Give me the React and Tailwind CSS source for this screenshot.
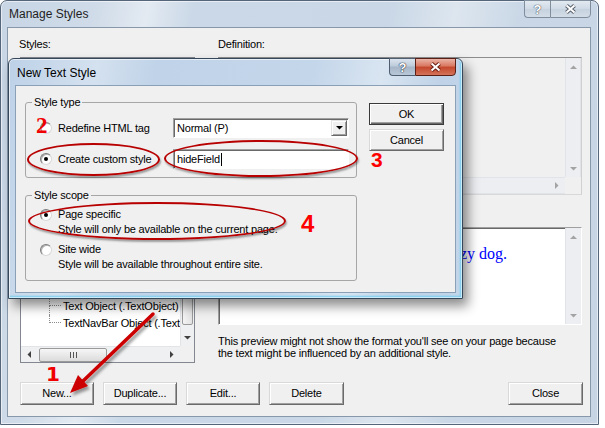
import React from 'react';

const SANS = "font-['Liberation_Sans',Arial,sans-serif]";

function Tri({ dir, color = '#505050' }) {
    const vert = dir === 'up' || dir === 'down';
    const pts = {
        up: '0,4 3.5,0.5 7,4',
        down: '0,0 7,0 3.5,3.5',
        left: '4,0 4,7 0.5,3.5',
        right: '0,0 0,7 3.5,3.5',
    }[dir];
    return (
        <svg width={vert ? 7 : 4} height={vert ? 4 : 7} viewBox={vert ? '0 0 7 4' : '0 0 4 7'}>
            <polygon points={pts} fill={color} />
        </svg>
    );
}

function XGlyph({ active }) {
    const d = 'M2.5 1.5 L10.5 8.5 M10.5 1.5 L2.5 8.5';
    return (
        <svg width="13" height="10" viewBox="0 0 13 10">
            <path d={d} stroke={active ? '#6b1d12' : '#56606c'} strokeWidth="4" />
            <path d={d} stroke="#fff" strokeWidth="2" />
        </svg>
    );
}

function Caption({ active }) {
    return (
        <div className="ml-auto -mt-[1px] flex">
            <div className={`w-[26px] h-[18px] flex items-center justify-center border border-r-0 rounded-bl-[4px] ${active ? 'border-[#4f5e70] bg-[linear-gradient(#dbe4ee,#bccad9_45%,#a6b6c8_50%,#b9c8d8)]' : 'border-[#7f8d9c] bg-[linear-gradient(#e2e9f0,#cfdae6_50%,#c6d2df_51%,#d3dde8)]'}`}>
                <span className={`text-[13px] font-bold leading-none tracking-normal text-white ${active ? '[text-shadow:0_0_1px_#2b3541,0_0_1px_#2b3541,0_0_1px_#2b3541]' : '[text-shadow:0_0_1px_#59636f,0_0_1px_#59636f,0_0_1px_#59636f]'}`}>?</span>
            </div>
            <div className={`w-[41px] h-[18px] flex items-center justify-center border rounded-br-[4px] ${active ? 'border-[#5a1f17] bg-[linear-gradient(#eab3a6,#d8765f_45%,#c4462b_50%,#d3745a)]' : 'border-[#7f8d9c] bg-[linear-gradient(#e2e9f0,#cfdae6_50%,#c6d2df_51%,#d3dde8)]'}`}>
                <XGlyph active={active} />
            </div>
        </div>
    );
}

function Btn({ children, className = '', def = false }) {
    return (
        <div className={`flex items-center justify-center bg-[#f0f0f0] border ${def
            ? 'border-[#3a3a3a] shadow-[inset_1px_1px_0_#fff,inset_-1px_-1px_0_#696969,inset_-2px_-2px_0_#a0a0a0]'
            : 'border-t-[#d9d9d9] border-l-[#d9d9d9] border-r-[#6a6a6a] border-b-[#6a6a6a] shadow-[inset_1px_1px_0_#fff,inset_-1px_-1px_0_#a0a0a0]'} ${className}`}>
            {children}
        </div>
    );
}

function Radio({ checked }) {
    return (
        <span className="w-[12px] h-[12px] shrink-0 rounded-full bg-white border border-t-[#7a7a7a] border-l-[#7a7a7a] border-r-[#d8d8d8] border-b-[#d8d8d8] shadow-[inset_1px_1px_0_#b0b0b0] flex items-center justify-center">
            {checked && <span className="w-[4px] h-[4px] rounded-full bg-black" />}
        </span>
    );
}

const sunken = 'border border-t-[#a0a0a0] border-l-[#a0a0a0] border-r-white border-b-white shadow-[inset_1px_1px_0_#696969]';

function ScrollBtn({ dir, className = '', color }) {
    return (
        <div className={`flex items-center justify-center shrink-0 ${className}`}>
            <Tri dir={dir} color={color} />
        </div>
    );
}

const treeItems = [
    'Body (body)',
    'Heading 1 (h1)',
    'Heading 2 (h2)',
    'Hyperlink (a)',
    'Banner Object (.BannerObject)',
    'Footer Object (.FooterObject)',
    'Form Object (.FormObject)',
    'Header Object (.HeaderObject)',
    'Image Object (.ImageObject)',
    'Layout Table (.LayoutTable)',
    'Nav Object (.NavObject)',
    'Page Object (.PageObject)',
    'Search Object (.SearchObject)',
    'Table Object (.TableObject)',
    'Text Object (.TextObject)',
    'TextNavBar Object (.TextNavBarObject)',
];

function StylesList() {
    return (
        <div className="h-[306px] flex flex-col bg-white border border-[#828790]">
            <div className="flex-1 flex min-h-0">
                <div className="flex-1 overflow-hidden pt-[2px] whitespace-nowrap">
                    {treeItems.map((t, i) => {
                        const last = i === treeItems.length - 1;
                        return (
                            <div key={t} className="flex h-[17px] items-center">
                                <div className="w-[28px] shrink-0" />
                                <div className="w-[12px] h-full shrink-0 flex flex-col">
                                    <div className="h-[8px] border-l border-b border-dotted border-[#8c8c8c]" />
                                    <div className={`flex-1 ${last ? '' : 'border-l border-dotted border-[#8c8c8c]'}`} />
                                </div>
                                <span className="ml-[2px]">{t}</span>
                            </div>
                        );
                    })}
                </div>
                <div className="w-[14px] flex flex-col bg-[#eef0f2] border-l border-[#e2e4e7]">
                    <ScrollBtn dir="up" className="h-[17px]" color="#404040" />
                    <div className="h-[249px] mt-[1px] mx-[1px] rounded-[2px] border border-[#9a9a9a] bg-[linear-gradient(90deg,#f4f4f4,#e2e2e2)]" />
                    <div className="flex-1" />
                    <ScrollBtn dir="down" className="h-[17px]" color="#404040" />
                </div>
            </div>
            <div className="h-[16px] flex">
                <div className="flex-1 flex items-center bg-[#eef0f2] border-t border-[#e2e4e7]">
                    <ScrollBtn dir="left" className="w-[15px] h-full" color="#404040" />
                    <div className="ml-[3px] w-[68px] h-[14px] rounded-[2px] border border-[#9a9a9a] bg-[linear-gradient(#f6f6f6,#dcdcdc)] flex items-center justify-center gap-[2px]">
                        <span className="w-[1px] h-[6px] bg-[#555]" />
                        <span className="w-[1px] h-[6px] bg-[#555]" />
                        <span className="w-[1px] h-[6px] bg-[#555]" />
                    </div>
                    <div className="flex-1" />
                    <ScrollBtn dir="right" className="w-[17px] h-full" color="#404040" />
                </div>
                <div className="w-[14px] bg-[#f0f0f0]" />
            </div>
        </div>
    );
}

function DefinitionBox() {
    return (
        <div className="h-[138px] flex flex-col bg-[#f0f0f0] border border-t-[#8d8d8d] border-l-[#a0a0a0] border-r-[#d0d0d0] border-b-[#d8d8d8]">
            <div className="flex-1 flex">
                <div className="flex-1" />
                <div className="w-[16px] flex flex-col justify-between bg-[#eceef1] border-l border-r border-[#e0e3e7]">
                    <ScrollBtn dir="up" className="h-[17px]" color="#a3a3a3" />
                    <ScrollBtn dir="down" className="h-[17px]" color="#a3a3a3" />
                </div>
            </div>
            <div className="h-[17px] flex">
                <div className="flex-1 flex justify-end bg-[#eceef1] border-t border-b border-[#e0e3e7]">
                    <ScrollBtn dir="right" className="w-[17px] h-full" color="#a3a3a3" />
                </div>
                <div className="w-[16px] bg-[#f0f0f0]" />
            </div>
        </div>
    );
}

function PreviewBox() {
    return (
        <div className={`h-[98px] flex bg-white ${sunken}`}>
            <div className="flex-1 min-w-0 overflow-hidden flex justify-end pr-[58px] pt-[17px]">
                <span className="whitespace-nowrap font-['Liberation_Serif','Times_New_Roman',serif] text-[16px] leading-[18px] tracking-normal text-[#0000ff]">
                    The quick brown fox jumps over the lazy dog.
                </span>
            </div>
            <div className="w-[16px] flex flex-col justify-between bg-[#eceef1] border-l border-[#e0e3e7]">
                <ScrollBtn dir="up" className="h-[17px]" color="#a3a3a3" />
                <ScrollBtn dir="down" className="h-[17px]" color="#a3a3a3" />
            </div>
        </div>
    );
}

function ManageStyles() {
    return (
        <div className="w-[599px] h-[425px] flex flex-col rounded-t-[7px] border border-[#56667a] pl-[6px] pr-[7px] pb-[7px] bg-[linear-gradient(100deg,#c7d5e5_0%,#cfdbe8_14%,#e3eaf2_22%,#cad8e7_29%,#c9d7e6_58%,#dde6ef_68%,#c9d7e6_78%,#c6d4e4_100%)] shadow-[inset_0_0_0_1px_rgba(255,255,255,0.55)]">
            <div className="h-[26px] flex items-start">
                <span className="mt-[6px] ml-[2px] text-[12px] leading-[14px] tracking-normal text-[#1e1e1e]">Manage Styles</span>
                <Caption active={false} />
            </div>
            <div className="flex-1 flex flex-col border border-[#8898ab] bg-[#f0f0f0] pl-[12px] pr-[7px] pt-[10px]">
                <div className="flex gap-[23px]">
                    <div className="w-[175px] flex flex-col">
                        <div className="h-[13px] leading-[13px] mb-[6px] -ml-[1px]">Styles:</div>
                        <StylesList />
                    </div>
                    <div className="w-[364px] flex flex-col">
                        <div className="h-[13px] leading-[13px] mb-[6px]">Definition:</div>
                        <DefinitionBox />
                        <div className="h-[13px] leading-[13px] mt-[12px] mb-[7px]">Preview:</div>
                        <PreviewBox />
                        <p className="mt-[10px] leading-[12px]">
                            This preview might not show the format you'll see on your page because
                            <br />
                            the text might be influenced by an additional style.
                        </p>
                    </div>
                </div>
                <div className="flex mt-[19px] gap-[9px]">
                    <Btn className="w-[74px] h-[23px]">New...</Btn>
                    <Btn className="w-[74px] h-[23px]">Duplicate...</Btn>
                    <Btn className="w-[74px] h-[23px]">Edit...</Btn>
                    <Btn className="w-[75px] h-[23px]">Delete</Btn>
                    <Btn className="ml-auto w-[75px] h-[23px]">Close</Btn>
                </div>
            </div>
        </div>
    );
}

function NewTextStyle() {
    return (
        <div className="absolute left-[8px] top-[58px] w-[455px] h-[241px] flex flex-col rounded-t-[6px] border border-[#36475a] px-[6px] pb-[5px] bg-[linear-gradient(100deg,#bdd1e7_0%,#d4e1ef_18%,#c0d3e8_30%,#c4d6ea_62%,#d9e5f1_76%,#bfd2e7_88%,#c3d5e9_100%)] shadow-[inset_0_0_0_1px_rgba(255,255,255,0.6),inset_-2px_-2px_2px_#76cdef,5px_7px_12px_rgba(0,0,0,0.45)]">
            <div className="h-[26px] flex items-start">
                <span className="mt-[7px] ml-[2px] text-[12px] leading-[14px] tracking-normal text-black">New Text Style</span>
                <Caption active />
            </div>
            <div className="flex-1 flex border border-[#8aa0b6] bg-[#f0f0f0] pl-[9px] pt-[10px]">
                <div className="w-[332px] flex flex-col gap-[11px]">
                    <fieldset className="border border-[#a6a6a6] rounded-[3px] pb-[8px]">
                        <legend className="ml-[6px] px-[2px] leading-[13px]">Style type</legend>
                        <div className="mt-[9px] h-[20px] flex items-center pl-[14px]">
                            <Radio />
                            <span className="ml-[6px] w-[115px] shrink-0">Redefine HTML tag</span>
                            <div className={`w-[176px] h-[20px] flex bg-white ${sunken}`}>
                                <span className="flex-1 self-center pl-[3px]">Normal (P)</span>
                                <div className="w-[16px] m-[1px] flex items-center justify-center bg-[#f0f0f0] border border-t-[#e3e3e3] border-l-[#e3e3e3] border-r-[#696969] border-b-[#696969] shadow-[inset_1px_1px_0_#fff,inset_-1px_-1px_0_#a0a0a0]">
                                    <Tri dir="down" color="#000" />
                                </div>
                            </div>
                        </div>
                        <div className="mt-[11px] h-[20px] flex items-center pl-[14px]">
                            <Radio checked />
                            <span className="ml-[6px] w-[115px] shrink-0">Create custom style</span>
                            <div className={`w-[176px] h-[20px] flex items-center bg-white pl-[3px] ${sunken}`}>
                                <span>hideField</span>
                                <span className="ml-[1px] w-[1px] h-[13px] bg-black" />
                            </div>
                        </div>
                    </fieldset>
                    <fieldset className="border border-[#a6a6a6] rounded-[3px] pb-[8px] leading-[15px]">
                        <legend className="ml-[6px] px-[2px] leading-[13px]">Style scope</legend>
                        <div className="mt-[5px] pl-[14px]">
                            <div className="flex items-center h-[15px]">
                                <Radio checked />
                                <span className="ml-[6px]">Page specific</span>
                            </div>
                            <div className="pl-[18px]">Style will only be available on the current page.</div>
                            <div className="mt-[5px] flex items-center h-[15px]">
                                <Radio />
                                <span className="ml-[6px]">Site wide</span>
                            </div>
                            <div className="pl-[18px]">Style will be available throughout entire site.</div>
                        </div>
                    </fieldset>
                </div>
                <div className="ml-[12px] mt-[7px] flex flex-col gap-[4px]">
                    <Btn def className="w-[75px] h-[22px]">OK</Btn>
                    <Btn className="w-[75px] h-[22px]">Cancel</Btn>
                </div>
            </div>
        </div>
    );
}

function Annotations() {
    const ring = 'absolute rounded-[50%] border-2 border-[#b80000] shadow-[1px_2px_2px_rgba(0,0,0,0.35)]';
    return (
        <>
            <div className={`${ring} left-[27px] top-[143px] w-[133px] h-[33px]`} />
            <div className={`${ring} left-[164px] top-[140px] w-[194px] h-[37px]`} />
            <div className={`${ring} left-[28px] top-[202px] w-[258px] h-[38px]`} />

            <span className="absolute left-[36px] top-[114px] font-['Liberation_Serif',serif] font-bold text-[23px] leading-none tracking-normal text-[#f00000]">2</span>
            <span className="absolute left-[371px] top-[149px] font-['Liberation_Sans',Arial,sans-serif] font-bold text-[21px] leading-none tracking-normal text-[#ff0000]">3</span>
            <span className="absolute left-[301px] top-[212px] font-['Liberation_Sans',Arial,sans-serif] font-bold text-[24px] leading-none tracking-normal text-[#ff0000]">4</span>
            <span className="absolute left-[46px] top-[364px] font-['DejaVu_Sans',sans-serif] font-bold text-[20px] leading-none tracking-normal text-[#f00000]">1</span>

            <svg className="absolute left-0 top-0 pointer-events-none" width="605" height="428">
                <defs>
                    <filter id="arrowShadow" x="-30%" y="-30%" width="160%" height="160%">
                        <feDropShadow dx="2" dy="3" stdDeviation="1.5" floodColor="#000" floodOpacity="0.4" />
                    </filter>
                </defs>
                <g filter="url(#arrowShadow)">
                    <line x1="153" y1="314" x2="82" y2="382" stroke="#cc0000" strokeWidth="3.5" strokeLinecap="round" />
                    <polygon points="70,393 88,386 78,375" fill="#cc0000" />
                </g>
            </svg>
        </>
    );
}

export default function App() {
    return (
        <div className={`relative w-[605px] h-[428px] bg-white overflow-hidden ${SANS} text-[11px] tracking-[-0.2px] text-black`}>
            <ManageStyles />
            <NewTextStyle />
            <Annotations />
        </div>
    );
}
